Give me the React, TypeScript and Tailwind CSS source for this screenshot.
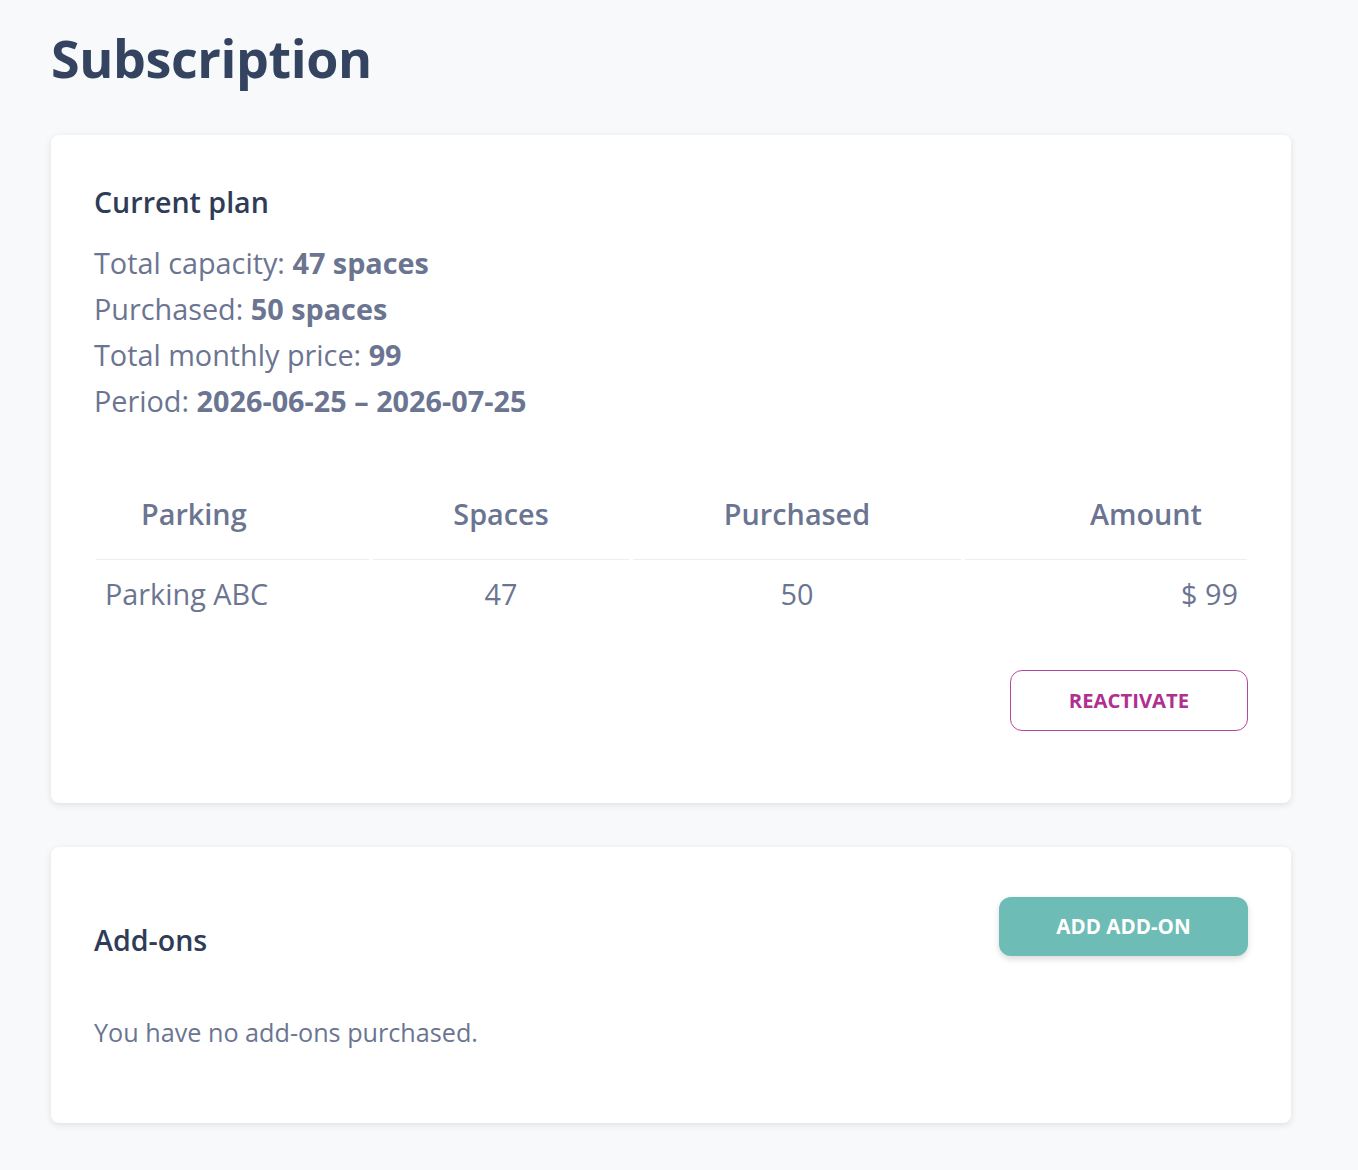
import React from "react";

export default function App() {
  const font = { fontFamily: '"Open Sans", "Noto Sans", sans-serif' };
  return (
    <div style={font} className="min-h-[1170px] w-[1358px] bg-[#f8f9fb] pl-[51px]">
      <h1 className="pt-[27px] text-[52px] font-bold leading-[62px] tracking-[-0.4px] text-[#34435f]">
        Subscription
      </h1>

      <div className="mt-[46px] w-[1240px] rounded-[8px] bg-white pl-[43px] pr-[44px] pt-[49px] pb-[72px] shadow-[0_2px_6px_rgba(30,40,60,0.12)]">
        <h2 className="text-[28.6px] font-semibold leading-[36px] text-[#2f3c57]">Current plan</h2>
        <div className="mt-[20px] text-[28.8px] leading-[46px] text-[#6b7591]">
          <div>
            Total capacity: <span className="font-bold">47 spaces</span>
          </div>
          <div>
            Purchased: <span className="font-bold">50 spaces</span>
          </div>
          <div>
            Total monthly price: <span className="font-bold">99</span>
          </div>
          <div>
            Period: <span className="font-bold">2026-06-25 – 2026-07-25</span>
          </div>
        </div>

        <div className="ml-[2px] mt-[45px] grid grid-cols-[273px_256px_328px_282px] gap-x-[4px] text-[28.8px] leading-[40px] text-[#6b7591]">
          <div className="border-b border-[#eceef1] pt-[25px] pb-[25px] pl-[45px] text-left font-semibold">Parking</div>
          <div className="border-b border-[#eceef1] pt-[25px] pb-[25px] text-center font-semibold">Spaces</div>
          <div className="border-b border-[#eceef1] pt-[25px] pb-[25px] text-center font-semibold">Purchased</div>
          <div className="border-b border-[#eceef1] pt-[25px] pb-[25px] pr-[45px] text-right font-semibold">Amount</div>
          <div className="pt-[14px] pl-[9px] text-left">Parking ABC</div>
          <div className="pt-[14px] text-center">47</div>
          <div className="pt-[14px] text-center">50</div>
          <div className="pt-[14px] pr-[9px] text-right">$ 99</div>
        </div>

        <div className="mt-[56px] flex justify-end">
          <button className="mr-[-1px] flex h-[61px] w-[238px] items-center justify-center rounded-[12px] border border-[#b5489c] bg-white text-[20.3px] font-bold text-[#b0308f]">
            REACTIVATE
          </button>
        </div>
      </div>

      <div className="mt-[44px] w-[1240px] rounded-[8px] bg-white pl-[43px] pr-[44px] pt-[50px] pb-[75px] shadow-[0_2px_6px_rgba(30,40,60,0.12)]">
        <div className="flex items-start justify-between">
          <h2 className="mt-[25px] text-[28.6px] font-semibold leading-[36px] text-[#2f3c57]">Add-ons</h2>
          <button className="mr-[-1px] flex h-[59px] w-[249px] items-center justify-center rounded-[12px] bg-[#6dbcb5] text-[20.6px] font-bold text-white shadow-[0_3px_6px_rgba(0,0,0,0.15)]">
            ADD ADD-ON
          </button>
        </div>
        <p className="mt-[58px] text-[25.2px] leading-[32px] text-[#6b7591]">You have no add-ons purchased.</p>
      </div>
    </div>
  );
}
